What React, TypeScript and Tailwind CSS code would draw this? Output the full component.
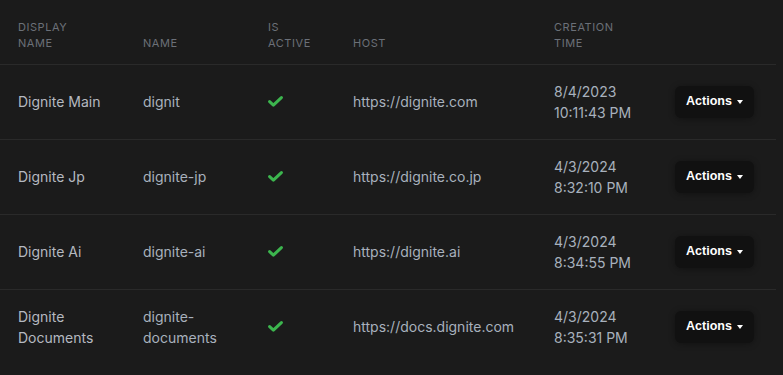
import React from "react";

type Tenant = {
  displayName: string;
  name: string;
  host: string;
  date: string;
  time: string;
};

const tenants: Tenant[] = [
  { displayName: "Dignite Main", name: "dignit", host: "https://dignite.com", date: "8/4/2023", time: "10:11:43 PM" },
  { displayName: "Dignite Jp", name: "dignite-jp", host: "https://dignite.co.jp", date: "4/3/2024", time: "8:32:10 PM" },
  { displayName: "Dignite Ai", name: "dignite-ai", host: "https://dignite.ai", date: "4/3/2024", time: "8:34:55 PM" },
  { displayName: "Dignite Documents", name: "dignite-documents", host: "https://docs.dignite.com", date: "4/3/2024", time: "8:35:31 PM" },
];

function CheckIcon() {
  // font-awesome style check
  return (
    <svg width="15" height="11" viewBox="0 0 15 11" className="block">
      <path d="M1.6 5.6 L5.4 9.2 L13.4 1.6" fill="none" stroke="#3cb54e" strokeWidth="3" strokeLinecap="round" strokeLinejoin="round" />
    </svg>
  );
}

export default function App() {
  return (
    <div className="w-[783px] h-[375px] bg-[#1b1b1b] overflow-hidden" style={{ fontFamily: "Inter, 'Noto Sans', sans-serif" }}>
      <table className="w-[776px] table-fixed border-collapse">
        <colgroup>
          <col className="w-[125px]" />
          <col className="w-[125px]" />
          <col className="w-[85px]" />
          <col className="w-[201px]" />
          <col className="w-[121px]" />
          <col className="w-[119px]" />
        </colgroup>
        <thead>
          <tr className="border-b border-[#2a2a2a] h-[64px]">
            <th className="pl-[18px] pb-[13px] align-bottom text-left font-normal text-[11px] leading-4 tracking-[0.05em] text-[#6b7078] uppercase">Display<br />Name</th>
            <th className="pl-[18px] pb-[13px] align-bottom text-left font-normal text-[11px] leading-4 tracking-[0.05em] text-[#6b7078] uppercase">Name</th>
            <th className="pl-[18px] pb-[13px] align-bottom text-left font-normal text-[11px] leading-4 tracking-[0.05em] text-[#6b7078] uppercase">Is<br />Active</th>
            <th className="pl-[18px] pb-[13px] align-bottom text-left font-normal text-[11px] leading-4 tracking-[0.05em] text-[#6b7078] uppercase">Host</th>
            <th className="pl-[18px] pb-[13px] align-bottom text-left font-normal text-[11px] leading-4 tracking-[0.05em] text-[#6b7078] uppercase">Creation<br />Time</th>
            <th className="pl-[18px] pb-[13px] align-bottom" />
          </tr>
        </thead>
        <tbody>
          {tenants.map((t) => (
            <tr key={t.name} className="border-b border-[#2a2a2a] last:border-b-0 h-[75px] text-[14px] leading-[21px]">
              <td className="pl-[18px] pr-2 align-middle text-[#b5b9c0]">{t.displayName}</td>
              <td className="pl-[18px] pr-2 align-middle text-[#a8b1bd]">{t.name}</td>
              <td className="pl-[18px] align-middle">
                <CheckIcon />
              </td>
              <td className="pl-[18px] align-middle text-[#a8b1bd]">{t.host}</td>
              <td className="pl-[18px] align-middle text-[#a8b1bd]">
                {t.date}
                <br />
                {t.time}
              </td>
              <td className="pl-[18px] align-middle">
                <button
                  className="h-8 w-[79px] rounded-md bg-[#111111] shadow-[0_1px_6px_rgba(0,0,0,0.35)] text-white text-[12.5px] font-bold flex items-center justify-center gap-[5px]"
                  style={{ fontFamily: "'Liberation Sans', Arial, sans-serif" }}
                >
                  Actions
                  <span className="inline-block w-0 h-0 border-l-[3.5px] border-r-[3.5px] border-t-[4px] border-l-transparent border-r-transparent border-t-white" />
                </button>
              </td>
            </tr>
          ))}
        </tbody>
      </table>
    </div>
  );
}
